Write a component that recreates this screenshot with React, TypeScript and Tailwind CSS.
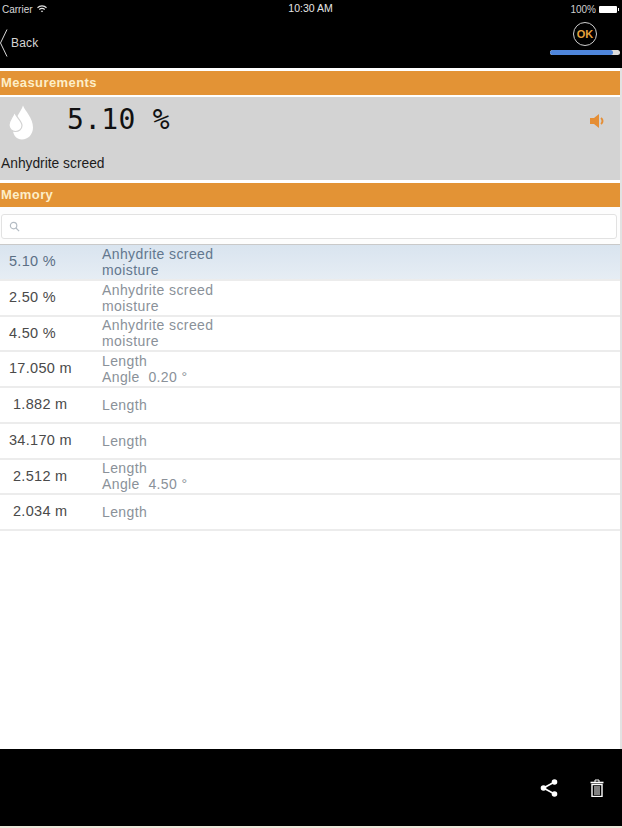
const rows = [
  { value: '5.10 %', a: 'Anhydrite screed', b: 'moisture', pl: 'pl-[9px]', selected: true },
  { value: '2.50 %', a: 'Anhydrite screed', b: 'moisture', pl: 'pl-[9px]' },
  { value: '4.50 %', a: 'Anhydrite screed', b: 'moisture', pl: 'pl-[9px]' },
  { value: '17.050 m', a: 'Length', b: 'Angle  0.20 °', pl: 'pl-[9px]' },
  { value: '1.882 m', a: 'Length', pl: 'pl-[13px]' },
  { value: '34.170 m', a: 'Length', pl: 'pl-[9px]' },
  { value: '2.512 m', a: 'Length', b: 'Angle  4.50 °', pl: 'pl-[13px]' },
  { value: '2.034 m', a: 'Length', pl: 'pl-[13px]' },
]

function SectionBar({ title }: { title: string }) {
  return (
    <div className="h-6 bg-[#e39335] pl-px flex items-center text-[13px] font-bold text-[#fdeec8] tracking-[0.4px]">
      {title}
    </div>
  )
}

export default function App() {
  return (
    <div className="w-[622px] h-[828px] bg-[#ece6da] flex flex-col overflow-hidden font-['Liberation_Sans',sans-serif]">
      {/* status + nav */}
      <div className="h-[68px] bg-black text-white shrink-0">
        <div className="h-[18px] flex items-center justify-between pl-[2px] pr-[3px] text-[10px] text-[#d8d8d8]">
          <div className="flex items-center gap-1 w-[120px]">
            <span>Carrier</span>
            <svg width="10" height="8" viewBox="0 0 20 15" fill="none" stroke="#e5e5e5" strokeWidth="2.2">
              <path d="M1 5 C6 0 14 0 19 5" />
              <path d="M4.5 8.5 C8 5.5 12 5.5 15.5 8.5" />
              <path d="M10 14 L7.5 11.5 C9 10.5 11 10.5 12.5 11.5 Z" fill="#e5e5e5" stroke="none" />
            </svg>
          </div>
          <span className="text-[10.5px] text-[#e5e5e5]">10:30 AM</span>
          <div className="flex items-center justify-end gap-[3px] w-[120px]">
            <span className="text-[#cfcfcf]">100%</span>
            <div className="w-[18px] h-[7px] bg-white rounded-[1px]" />
            <div className="w-px h-[3px] bg-white -ml-[2px]" />
          </div>
        </div>
        <div className="flex items-center h-[50px]">
          <svg width="8" height="28" viewBox="0 0 8 28" fill="none" stroke="#d8d8d8" strokeWidth="1">
            <path d="M7 0.5 L0.5 14 L7 27.5" />
          </svg>
          <span className="ml-[3px] text-[12px] text-[#d5d5d5] tracking-[0.2px]">Back</span>
          <div className="ml-auto mr-[2px] flex flex-col items-center -mt-[9px]">
            <div className="w-6 h-6 rounded-full border border-[#cfcfcf] flex items-center justify-center text-[11px] font-bold text-[#e6a03c]">
              OK
            </div>
            <div className="w-[70px] h-[5px] mt-[4px] rounded-full bg-[#dcdcdc] overflow-hidden">
              <div className="w-[63px] h-full bg-[#4f86dc] rounded-full" />
            </div>
          </div>
        </div>
      </div>

      <div className="flex-1 flex flex-col border-r-2 border-[#e2e2e2] bg-white">
        <div className="h-[3px] bg-white shrink-0" />
        <SectionBar title="Measurements" />
        <div className="h-[2px] bg-white shrink-0" />

        {/* current measurement */}
        <div className="h-[83px] bg-[#d3d3d3] shrink-0 flex flex-col">
          <div className="h-[46px] flex items-center">
            <svg width="26" height="35" viewBox="0 0 26 35" className="ml-[8px] mt-[4px]">
              <path d="M15 0.5 C17 6 25 13 25 22.5 C25 29.5 20 34.5 14 34.5 C8 34.5 4 29 5 22 C6 14 13 7 15 0.5 Z" fill="white" />
              <path d="M6.5 7 C8 12 14 16 14 20.5 C14 24.5 10.5 26.5 7.5 26.5 C4 26.5 1 24 1 20 C1 15.5 5 12 6.5 7 Z" fill="white" stroke="#d3d3d3" strokeWidth="1.2" />
            </svg>
            <span className="ml-[33px] font-['DejaVu_Sans_Mono',monospace] text-[28px] text-[#111] tracking-[0.3px] whitespace-pre">
              5.10 %
            </span>
            <svg width="18" height="16" viewBox="0 0 18 16" fill="#e58e35" className="ml-auto mr-[13px] mt-[2px]">
              <path d="M1 5 H5 L10 1 V15 L5 11 H1 Z" />
              <path d="M12 5 C14 6.5 14 9.5 12 11" fill="none" stroke="#e58e35" strokeWidth="2" />
            </svg>
          </div>
          <div className="mt-[11px] pl-px text-[13.8px] text-[#1c1c1c]">Anhydrite screed</div>
        </div>

        <div className="h-[3px] bg-white shrink-0" />
        <SectionBar title="Memory" />

        {/* search */}
        <div className="h-[38px] shrink-0 bg-[#fdfdfd] px-px pt-[7px] border-b border-[#c9c9c9]">
          <div className="h-[25px] mr-[2px] rounded-[3px] border border-[#e2e2e2] bg-white flex items-center pl-[7px]">
            <svg width="11" height="11" viewBox="0 0 12 12" fill="none" stroke="#b4bcc4" strokeWidth="1.3">
              <circle cx="5" cy="5" r="3.5" />
              <path d="M7.6 7.6 L11 11" />
            </svg>
          </div>
        </div>

        {/* list */}
        <div className="flex-1">
          {rows.map((row) => (
            <div
              key={row.value + row.a}
              className={`h-[35.75px] flex items-center border-b-2 border-[#ececec] ${row.selected ? 'bg-gradient-to-b from-[#d9e4ef] to-[#e6edf4]' : 'bg-white'}`}
            >
              <div className={`w-[102px] shrink-0 text-[14.5px] tracking-[0.3px] ${row.pl} ${row.selected ? 'text-[#5b6f85]' : 'text-[#4a4a4a]'}`}>
                {row.value}
              </div>
              <div className={`text-[14px] leading-4 tracking-[0.4px] whitespace-pre ${row.selected ? 'text-[#62778e]' : 'text-[#8a9199]'}`}>
                <div>{row.a}</div>
                {row.b && <div>{row.b}</div>}
              </div>
            </div>
          ))}
        </div>
      </div>

      {/* toolbar */}
      <div className="h-[77px] mb-[2px] bg-black shrink-0 flex items-center justify-end gap-[32px] pr-[18px]">
        <svg width="18" height="18" viewBox="0 0 18 18" fill="white" stroke="white" strokeWidth="1.6">
          <circle cx="3.5" cy="9" r="2" />
          <circle cx="14.5" cy="3" r="2" />
          <circle cx="14.5" cy="15" r="2" />
          <path d="M3.5 9 L14.5 3 M3.5 9 L14.5 15" fill="none" />
        </svg>
        <svg width="14" height="18" viewBox="0 0 14 18" fill="none" stroke="white">
          <path d="M0.5 3.5 H13.5" strokeWidth="1.6" />
          <path d="M5 3 V1 H9 V3" strokeWidth="1" />
          <rect x="2" y="5.5" width="10" height="12" strokeWidth="1.4" />
          <path d="M5 7 V16 M7 7 V16 M9 7 V16" strokeWidth="1" />
        </svg>
      </div>
    </div>
  )
}
